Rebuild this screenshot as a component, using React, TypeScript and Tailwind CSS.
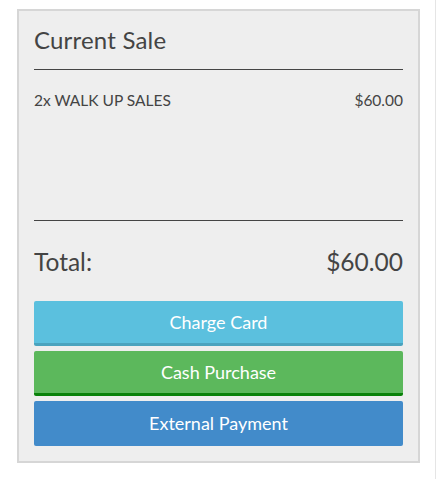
export default function App() {
  const font = { fontFamily: 'Lato, "Open Sans", sans-serif' };
  return (
    <div className="min-h-[479px] w-[436px] bg-white border-r border-[#e5e5e5]" style={font}>
      <div className="pl-[17px] pt-[9px]">
        <div className="w-[403px] border-2 border-[#d6d6d6] bg-[#eeeeee] px-[15px] pt-[14px] pb-[15px] text-[#444444]">
          <h3 className="text-[24px] leading-[30px] pb-[14px] border-b border-[#444444] tracking-[0.2px]">Current Sale</h3>
          <div className="h-[151px] border-b border-[#444444] pt-[20px]">
            <div className="flex justify-between text-[15.5px] leading-[20px]">
              <span>2x WALK UP SALES</span>
              <span>$60.00</span>
            </div>
          </div>
          <div className="flex justify-between text-[24.5px] leading-[30px] pt-[26px] pb-[24px]">
            <span>Total:</span>
            <span>$60.00</span>
          </div>
          <div className="flex flex-col gap-[5px]">
            <button className="h-[45px] rounded-[2px] bg-[#5bc0de] border-b-[3px] border-[#4aa3be] text-white text-[18px]">
              Charge Card
            </button>
            <button className="h-[45px] rounded-[2px] bg-[#5cb85c] border-b-[3px] border-[#0a820a] text-white text-[18px]">
              Cash Purchase
            </button>
            <button className="h-[45px] rounded-[2px] bg-[#428bca] text-white text-[18px]">
              External Payment
            </button>
          </div>
        </div>
      </div>
    </div>
  );
}
